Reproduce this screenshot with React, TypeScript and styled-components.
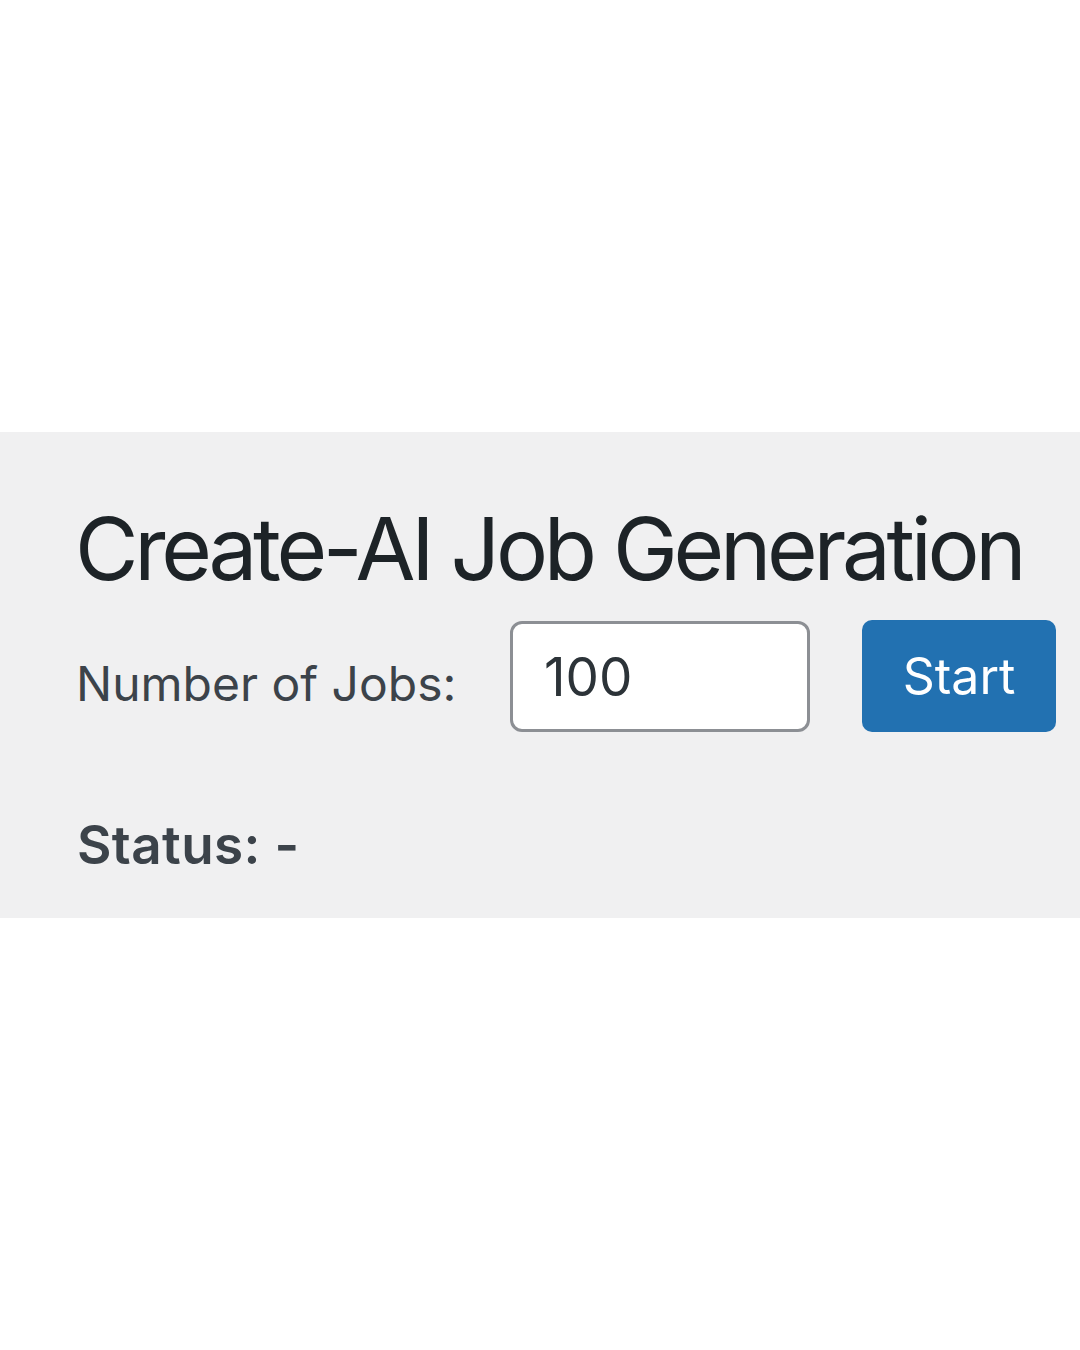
import React from "react";
import styled, { createGlobalStyle } from "styled-components";

const Global = createGlobalStyle`
  html, body { margin: 0; padding: 0; background: #ffffff; }
  body { font-family: Inter, "Noto Sans", "Liberation Sans", sans-serif; }
  * { box-sizing: border-box; }
`;

const Page = styled.div`
  width: 1080px;
  height: 1350px;
  display: flex;
  flex-direction: column;
  background: #ffffff;
`;

const TopSpace = styled.div`
  height: 432px;
  flex: none;
`;

const Panel = styled.section`
  height: 486px;
  flex: none;
  background: #f0f0f1;
  padding: 0 0 0 75px;
  display: flex;
  flex-direction: column;
  overflow: hidden;
`;

const Title = styled.h1`
  margin: 0;
  padding-top: 64px;
  font-size: 87px;
  line-height: 106px;
  font-weight: 400;
  letter-spacing: -4.3px;
  color: #1d2327;
  white-space: nowrap;
`;

const FormRow = styled.div`
  display: flex;
  align-items: flex-start;
  margin-top: 19px;
`;

const Label = styled.label`
  font-size: 48px;
  line-height: 58px;
  color: #3c434a;
  margin-top: 34px;
  margin-left: 1px;
  width: 434px;
  flex: none;
  white-space: nowrap;
`;

const NumberInput = styled.input`
  width: 300px;
  height: 111px;
  border: 3px solid #8c8f94;
  border-radius: 12px;
  background: #ffffff;
  padding: 0 0 0 31px;
  font-family: inherit;
  font-size: 53px;
  color: #2c3338;
  outline: none;
  flex: none;
`;

const StartButton = styled.button`
  margin-left: 52px;
  width: 194px;
  height: 112px;
  margin-top: -1px;
  border: none;
  border-radius: 10px;
  background: #2271b1;
  color: #ffffff;
  font-family: inherit;
  font-size: 50px;
  padding: 0;
  flex: none;
`;

const Status = styled.p`
  margin: 82px 0 0 2px;
  font-size: 53px;
  line-height: 62px;
  font-weight: 600;
  letter-spacing: 0.4px;
  color: #3c434a;
`;

export default function App() {
  return (
    <>
      <Global />
      <Page>
        <TopSpace />
        <Panel>
          <Title>Create-AI Job Generation</Title>
          <FormRow>
            <Label htmlFor="jobs">Number of Jobs:</Label>
            <NumberInput id="jobs" type="text" defaultValue="100" />
            <StartButton>Start</StartButton>
          </FormRow>
          <Status>Status: -</Status>
        </Panel>
      </Page>
    </>
  );
}
